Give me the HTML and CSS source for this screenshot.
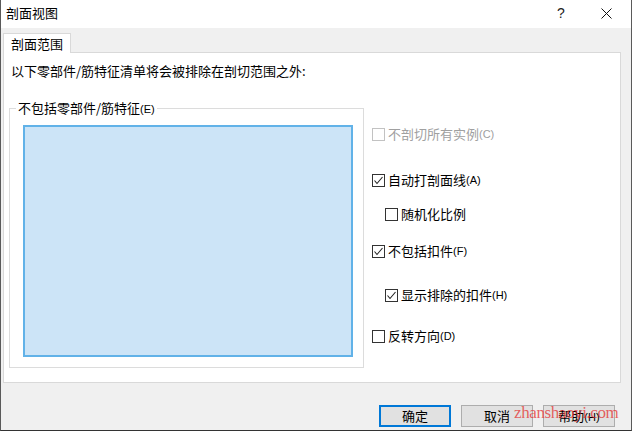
FILE: index.html
```html
<!DOCTYPE html>
<html>
  <head>
    <meta http-equiv="Content-type" content="text/html; charset=utf-8">
    <title>剖面视图</title>
    <link rel="stylesheet" href="styles.css">
  </head>
  <body>
    <div class="window">
      <div class="titlebar">
        <span class="title">剖面视图</span>
        <span class="help">?</span>
        <span class="close">
          <svg width="11" height="11" viewBox="0 0 11 11"><path d="M0.5 0.5L10.5 10.5M10.5 0.5L0.5 10.5" stroke="#111" stroke-width="1" fill="none"/></svg>
        </span>
      </div>
      <div class="tabs">
        <div class="tab">剖面范围</div>
      </div>
      <div class="panel">
        <div class="prompt">以下零部件/筋特征清单将会被排除在剖切范围之外:</div>
        <div class="content">
          <fieldset class="group">
            <legend>不包括零部件/筋特征<span class="key">(E)</span></legend>
            <div class="listbox"></div>
          </fieldset>
          <div class="options">
            <label class="opt opt1 disabled"><span class="box"></span>不剖切所有实例<span class="key">(C)</span></label>
            <label class="opt opt2"><span class="box"><svg width="11" height="11" viewBox="0 0 11 11"><path d="M1.5 5.5L4 8.5L9.5 2" stroke="#222" stroke-width="1.1" fill="none"/></svg></span>自动打剖面线<span class="key">(A)</span></label>
            <label class="opt opt3 sub"><span class="box"></span>随机化比例</label>
            <label class="opt opt4"><span class="box"><svg width="11" height="11" viewBox="0 0 11 11"><path d="M1.5 5.5L4 8.5L9.5 2" stroke="#222" stroke-width="1.1" fill="none"/></svg></span>不包括扣件<span class="key">(F)</span></label>
            <label class="opt opt5 sub"><span class="box"><svg width="11" height="11" viewBox="0 0 11 11"><path d="M1.5 5.5L4 8.5L9.5 2" stroke="#222" stroke-width="1.1" fill="none"/></svg></span>显示排除的扣件<span class="key">(H)</span></label>
            <label class="opt opt6"><span class="box"></span>反转方向<span class="key">(D)</span></label>
          </div>
        </div>
      </div>
      <div class="footer">
        <button class="btn default">确定</button>
        <button class="btn">取消</button>
        <button class="btn">帮助<span class="key">(H)</span></button>
      </div>
      <div class="watermark">zhanshaoyi.com</div>
    </div>
  </body>
</html>
```

FILE: styles.css
```css
body, html { margin: 0; }
body { font-family: "Noto Sans CJK SC", "Noto Sans", sans-serif; font-size: 13px; color: #000; }

.window { position: relative; width: 632px; height: 431px; box-sizing: border-box; background: #f0f0f0;
  border-left: 1px solid #5a5a5a; border-right: 1px solid #5a5a5a; border-bottom: 1px solid #333; }

.titlebar { display: flex; align-items: center; height: 28px; background: #fff; padding-left: 5px; }
.title { flex: 1; line-height: 16px; margin-top: -2px; }
.help { width: 14px; font-family: "Liberation Sans", sans-serif; font-size: 14px; color: #222; margin-right: 30px; margin-top: -2px; }
.close { display: flex; margin-right: 19px; margin-top: -2px; }

.tabs { display: flex; padding: 5px 0 0 2px; }
.tab { position: relative; z-index: 1; height: 19px; line-height: 19px; padding: 0 7px; background: #fff;
  border: 1px solid #d9d9d9; border-bottom: none; margin-bottom: -1px; }

.panel { height: 331px; box-sizing: border-box; margin: 0 10px 0 2px; background: #fff; border: 1px solid #d9d9d9; }
.prompt { line-height: 16px; margin: 10px 0 0 7px; }

.content { display: flex; align-items: flex-start; margin: 21px 0 0 5px; }
.group { margin: 0; padding: 8px 9px 10px 13px; border: 1px solid #dcdcdc; min-width: 0; width: 355px; box-sizing: border-box; }
.group legend { padding: 0 2px; margin-left: -7px; line-height: 16px; }
.listbox { width: 330px; height: 232px; box-sizing: border-box; background: #cce4f7; border: 2px solid #61b2e8; }

.key { font-family: "Liberation Sans", sans-serif; font-size: 11px; }

.options { display: flex; flex-direction: column; align-items: flex-start; margin-left: 8px; }
.opt { display: flex; align-items: center; height: 16px; line-height: 16px; }
.box { width: 13px; height: 13px; box-sizing: border-box; border: 1px solid #333; background: #fff; margin-right: 3px;
  display: flex; align-items: center; justify-content: center; }
.disabled { color: #a0a0a0; }
.disabled .box { border-color: #c2c2c2; }
.sub { margin-left: 13px; }
.opt1 { margin-top: 26px; }
.opt2 { margin-top: 30px; }
.opt3 { margin-top: 18px; }
.opt4 { margin-top: 21px; }
.opt5 { margin-top: 28px; }
.opt6 { margin-top: 25px; }

.footer { display: flex; justify-content: flex-end; gap: 10px; margin-top: 22px; padding-right: 16px; }
.btn { width: 72px; height: 22px; box-sizing: border-box; padding: 0; background: #e1e1e1; border: 1px solid #adadad;
  font-family: inherit; font-size: 13px; line-height: 18px; color: #000; }
.btn.default { border: 2px solid #0078d7; }

.watermark { position: absolute; left: 513px; top: 403px; font-family: "Liberation Serif", serif; font-size: 17px;
  letter-spacing: -0.4px; color: rgba(228, 40, 40, 0.72); }
```
